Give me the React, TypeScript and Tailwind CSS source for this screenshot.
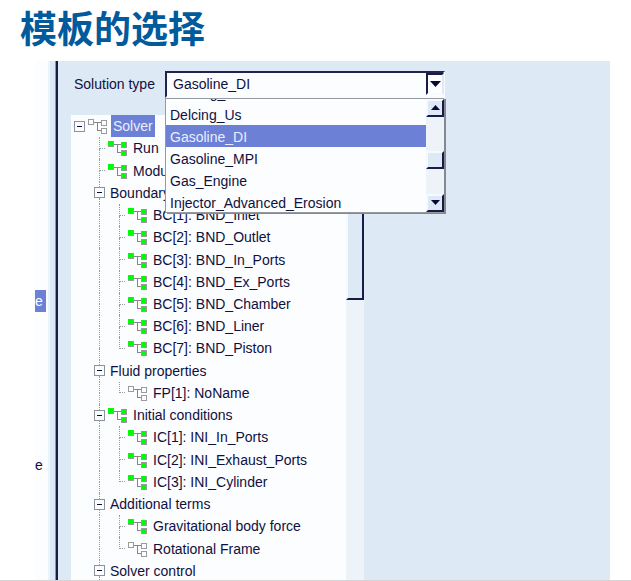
import React, { useState } from "react";

type TreeRow = {
    label: string;
    level: 0 | 1 | 2;
    expandable?: boolean;
    icon?: "on" | "off";
    selected?: boolean;
    last?: boolean;
};

const rows: TreeRow[] = [
    { label: "Solver", level: 0, expandable: true, icon: "off", selected: true },
    { label: "Run", level: 1, icon: "on" },
    { label: "Modules", level: 1, icon: "on" },
    { label: "Boundary", level: 1, expandable: true },
    { label: "BC[1]: BND_Inlet", level: 2, icon: "on" },
    { label: "BC[2]: BND_Outlet", level: 2, icon: "on" },
    { label: "BC[3]: BND_In_Ports", level: 2, icon: "on" },
    { label: "BC[4]: BND_Ex_Ports", level: 2, icon: "on" },
    { label: "BC[5]: BND_Chamber", level: 2, icon: "on" },
    { label: "BC[6]: BND_Liner", level: 2, icon: "on" },
    { label: "BC[7]: BND_Piston", level: 2, icon: "on", last: true },
    { label: "Fluid properties", level: 1, expandable: true },
    { label: "FP[1]: NoName", level: 2, icon: "off", last: true },
    { label: "Initial conditions", level: 1, expandable: true, icon: "on" },
    { label: "IC[1]: INI_In_Ports", level: 2, icon: "on" },
    { label: "IC[2]: INI_Exhaust_Ports", level: 2, icon: "on" },
    { label: "IC[3]: INI_Cylinder", level: 2, icon: "on", last: true },
    { label: "Additional terms", level: 1, expandable: true },
    { label: "Gravitational body force", level: 2, icon: "on" },
    { label: "Rotational Frame", level: 2, icon: "off", last: true },
    { label: "Solver control", level: 1, expandable: true },
];

const solutionTypes = ["Delcing_Us", "Gasoline_DI", "Gasoline_MPI", "Gas_Engine", "Injector_Advanced_Erosion"];

function NodeIcon({ on }: { on: boolean }) {
    const fill = on ? "#00fa08" : "#fcfdff";
    return (
        <svg width="20" height="16" viewBox="0 0 20 16" shapeRendering="crispEdges" className="shrink-0">
            <path d="M7 4.5H14M10.5 4V12.5H14" fill="none" stroke="#85858a" />
            <rect x="1" y="1" width="6" height="6" fill="#9b9b9f" />
            <rect x="14" y="2" width="6" height="6" fill="#9b9b9f" />
            <rect x="14" y="10" width="6" height="6" fill="#9b9b9f" />
            {on ? (
                <>
                    <rect x="1" y="1" width="5" height="5" fill={fill} />
                    <rect x="15" y="2" width="4" height="5" fill={fill} />
                    <rect x="15" y="11" width="4" height="4" fill={fill} />
                </>
            ) : (
                <>
                    <rect x="2" y="2" width="4" height="4" fill={fill} />
                    <rect x="15" y="3" width="4" height="4" fill={fill} />
                    <rect x="15" y="11" width="4" height="4" fill={fill} />
                </>
            )}
        </svg>
    );
}

// dotted guide; short = stops in the middle of the row
function Guide({ stub, short }: { stub?: boolean; short?: boolean }) {
    return (
        <span className="flex w-5 shrink-0 self-stretch pl-3">
            <span className="flex w-[6px] flex-col">
                <span className={`flex-1 border-l border-dotted border-[#9599a0] ${stub ? "border-b" : ""}`} />
                <span className={`flex-1 ${short ? "" : "border-l border-dotted border-[#9599a0]"}`} />
            </span>
        </span>
    );
}

function Toggle({ row }: { row: TreeRow }) {
    const line = row.level === 0 ? "flex-1" : "flex-1 border-l border-dotted border-[#9599a0]";
    return (
        <span className={`flex shrink-0 justify-end self-stretch pr-[2px] ${row.level === 0 ? "w-4" : "w-5"}`}>
            <span className="flex w-[11px] flex-col items-center">
                <span className={line} />
                <button
                    type="button"
                    aria-label={`Collapse ${row.label}`}
                    className="flex h-[11px] w-[11px] shrink-0 items-center justify-center border border-[#8b939e] bg-[#fcfdff]"
                >
                    <span className="h-px w-[5px] bg-[#0b0b3a]" />
                </button>
                <span className={line} />
            </span>
        </span>
    );
}

function TreeItem({ row }: { row: TreeRow }) {
    return (
        <li className="flex min-h-0 flex-1 items-center whitespace-nowrap">
            {row.level > 0 && <span className="w-4 shrink-0" />}
            {row.level === 2 && <Guide />}
            {row.expandable ? <Toggle row={row} /> : <Guide stub short={row.last} />}
            {row.icon && <NodeIcon on={row.icon === "on"} />}
            <span
                className={`flex h-[22px] items-center ${
                    row.selected ? "ml-1 bg-[#6c80d6] px-[2px] text-[#e9effc]" : row.icon ? "ml-[6px]" : "ml-[3px]"
                }`}
            >
                {row.label}
            </span>
        </li>
    );
}

function ScrollButton({ up }: { up?: boolean }) {
    return (
        <button
            type="button"
            aria-label={up ? "Scroll up" : "Scroll down"}
            className="flex h-[18px] w-full shrink-0 items-center justify-center border-2 border-t-[#f4fafe] border-r-[#1a1a48] border-b-[#1a1a48] border-l-[#f4fafe] bg-[#dde9f5]"
        >
            <svg width="9" height="5" viewBox="0 0 9 5" fill="#07073a">
                <path d={up ? "M0 5L4.5 0L9 5Z" : "M0 0L4.5 5L9 0Z"} />
            </svg>
        </button>
    );
}

function SolutionType() {
    const [value, setValue] = useState("Gasoline_DI");

    return (
        <div className="flex h-[37px] items-center pt-[9px] pl-4">
            <label htmlFor="solution-type" className="w-[91px] shrink-0 whitespace-nowrap">
                Solution type
            </label>
            <div className="relative w-[280px] shrink-0">
                <select
                    id="solution-type"
                    value={value}
                    onChange={(e) => setValue(e.target.value)}
                    className="block h-[27px] w-full appearance-none border-2 border-t-[#23234d] border-r-[#f8fcff] border-b-[#f8fcff] border-l-[#23234d] bg-[#fcfdff] pl-[6px] outline-none"
                >
                    {solutionTypes.map((t) => (
                        <option key={t}>{t}</option>
                    ))}
                </select>
                <span className="pointer-events-none absolute top-[2px] right-px flex h-[22px] w-[18px] items-center justify-center border-2 border-t-[#1a1a48] border-r-[#dde9f5] border-b-[#f8fcff] border-l-[#1a1a48]">
                    <svg width="11" height="6" viewBox="0 0 11 6" fill="#07073a">
                        <path d="M0 0H11L5.5 6Z" />
                    </svg>
                </span>

                <div className="absolute top-full left-0 z-10 flex h-[115px] w-[279px] border border-r-0 border-[#96999d] bg-[#fcfdff] shadow-[2px_1px_0_#85898f]">
                    <ul role="listbox" aria-label="Solution type" className="flex-1 overflow-hidden">
                        <li role="option" aria-selected={false} className="flex h-1 items-end overflow-hidden pl-1">
                            Cooling_
                        </li>
                        {solutionTypes.map((t) => (
                            <li
                                key={t}
                                role="option"
                                aria-selected={t === value}
                                onClick={() => setValue(t)}
                                className={`flex h-[22px] items-center pt-[2px] pl-1 ${
                                    t === value ? "bg-[#6c80d6] text-[#e9effc]" : ""
                                }`}
                            >
                                {t}
                            </li>
                        ))}
                    </ul>
                    <div className="flex w-[18px] flex-col bg-[#edf3f9]">
                        <ScrollButton up />
                        <div className="flex-1" />
                        <div className="h-[18px] border-2 border-t-[#f4fafe] border-r-[#1a1a48] border-b-[#1a1a48] border-l-[#f4fafe] bg-[#dde9f5]" />
                        <div className="h-[25px]" />
                        <ScrollButton />
                    </div>
                </div>
            </div>
        </div>
    );
}

export default function App() {
    return (
        <div className="flex h-screen flex-col overflow-hidden bg-white font-['Liberation_Sans',Arial,sans-serif] text-[14px] leading-5 text-[#10103e]">
            <h1 className="flex h-[61px] shrink-0 items-start pl-5 font-['Noto_Sans_CJK_SC',sans-serif] text-[37px] leading-[54px] font-bold text-[#005a9c]">
                模板的选择
            </h1>

            <main className="mr-[21px] ml-[35px] flex min-h-0 flex-1 bg-[#dde9f5]">
                <aside className="flex w-[13px] shrink-0 flex-col bg-[#fcfdff]">
                    <div className="mt-[229px] flex h-[22px] w-[11px] items-center bg-[#6c80d6] text-white">e</div>
                    <div className="mt-[142px] flex h-[22px] items-center">e</div>
                </aside>
                <div className="w-[7px] shrink-0 border-l-2 border-[#e9f5fd]" />
                <div className="w-[3px] shrink-0 border-l border-[#8f949e] bg-[#1a1a48]" />

                <section className="flex min-w-0 flex-1 flex-col">
                    <SolutionType />
                    <div className="mt-[17px] ml-[13px] flex min-h-0 w-[293px] flex-1 overflow-hidden">
                        <ul className="flex h-[467px] flex-1 flex-col bg-[#fcfdff]">
                            {rows.map((row) => (
                                <TreeItem key={row.label} row={row} />
                            ))}
                        </ul>
                        <div className="w-[18px] shrink-0 bg-[#edf3f9]">
                            <div className="h-[185px] border-2 border-t-[#f4fafe] border-r-[#1a1a48] border-b-[#1a1a48] border-l-[#f4fafe] bg-[#dde9f5]" />
                        </div>
                    </div>
                </section>
            </main>
            <div className="h-px shrink-0 bg-[#d5d5d5]" />
        </div>
    );
}
